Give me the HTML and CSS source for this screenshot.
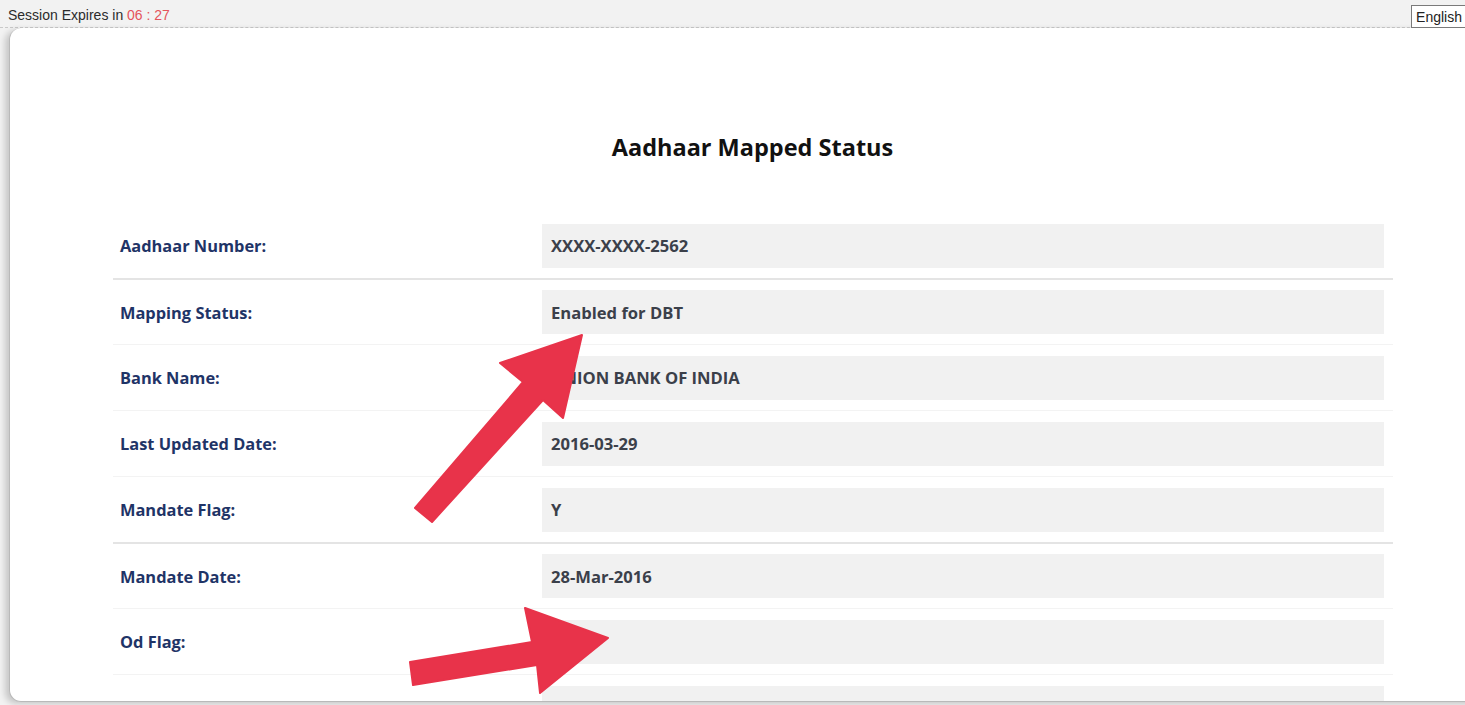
FILE: index.html
```html
<!DOCTYPE html>
<html lang="en">
<head>
<meta charset="utf-8">
<title>Aadhaar Mapped Status</title>
<link rel="stylesheet" href="styles.css">
</head>
<body>
<header class="topbar">
  <div class="session">Session Expires in <span class="timer">06 : 27</span></div>
  <button class="lang">English</button>
</header>

<main class="card">
  <h1 class="title">Aadhaar Mapped Status</h1>
  <div class="details">
    <div class="row first"><div class="label">Aadhaar Number:</div><div class="value">XXXX-XXXX-2562</div></div>
    <div class="row strong"><div class="label">Mapping Status:</div><div class="value">Enabled for DBT</div></div>
    <div class="row"><div class="label">Bank Name:</div><div class="value">UNION BANK OF INDIA</div></div>
    <div class="row"><div class="label">Last Updated Date:</div><div class="value">2016-03-29</div></div>
    <div class="row"><div class="label">Mandate Flag:</div><div class="value">Y</div></div>
    <div class="row strong"><div class="label">Mandate Date:</div><div class="value">28-Mar-2016</div></div>
    <div class="row"><div class="label">Od Flag:</div><div class="value"></div></div>
    <div class="row"><div class="label"></div><div class="value"></div></div>
  </div>
</main>

<svg class="marks" width="1465" height="705" viewBox="0 0 1465 705" aria-hidden="true">
  <polygon class="arrow" points="582,335 563,418 543,400 432,522 415,508 523,382 500,363"/>
  <polygon class="arrow" points="608,638 540,693 537,665 413,685 410,662 532,642 525,608"/>
</svg>
</body>
</html>
```

FILE: styles.css
```css
html, body {
  margin: 0;
  padding: 0;
}

body {
  width: 1465px;
  height: 705px;
  overflow: hidden;
  position: relative;
  background: #f2f2f2;
  font-family: "Open Sans", "Noto Sans", sans-serif;
}

.topbar {
  height: 28px;
  display: flex;
  align-items: flex-start;
  justify-content: space-between;
  padding-left: 8px;
  box-sizing: border-box;
  border-bottom: 1px dashed #c9c9c9;
}

.session {
  font-family: "Liberation Sans", Arial, sans-serif;
  font-size: 14px;
  line-height: 16px;
  padding-top: 7px;
  color: #2b2b2b;
}

.timer {
  color: #e4545b;
}

.lang {
  margin-top: 5px;
  margin-right: -2px;
  height: 23px;
  padding: 0 4px;
  background: #fff;
  border: 1px solid #7a7a7a;
  font-family: "Liberation Sans", Arial, sans-serif;
  font-size: 14px;
  color: #222;
}

.card {
  margin-left: 9px;
  width: 1486px;
  height: 674px;
  box-sizing: border-box;
  background: #fff;
  border: 1px solid #b9b9b9;
  border-top: none;
  border-radius: 12px;
  box-shadow: -4px 2px 6px rgba(0, 0, 0, 0.18);
  padding-top: 104px;
  overflow: hidden;
}

.title {
  margin: 0;
  text-align: center;
  font-size: 23.5px;
  line-height: 30px;
  font-weight: 700;
  color: #111;
  padding-left: 1px;
}

.details {
  margin: 50px 0 0 103px;
  width: 1280px;
}

.row {
  display: flex;
  align-items: center;
  height: 66px;
  box-sizing: border-box;
  border-top: 1px solid #f3f3f3;
  padding: 0 9px 0 7px;
}

.row.first {
  border-top-color: transparent;
}

.row.strong {
  border-top: 2px solid #e4e4e4;
}

.label {
  width: 422px;
  font-size: 16.4px;
  font-weight: 700;
  color: #1f3467;
}

.value {
  flex: 1;
  height: 44px;
  display: flex;
  align-items: center;
  padding-left: 9px;
  background: #f1f1f1;
  font-size: 16.6px;
  font-weight: 700;
  color: #3b404a;
}

.marks {
  position: absolute;
  left: 0;
  top: 0;
  pointer-events: none;
}

.arrow {
  fill: #e8334a;
  stroke: #e8334a;
  stroke-width: 2;
  stroke-linejoin: round;
}
```
